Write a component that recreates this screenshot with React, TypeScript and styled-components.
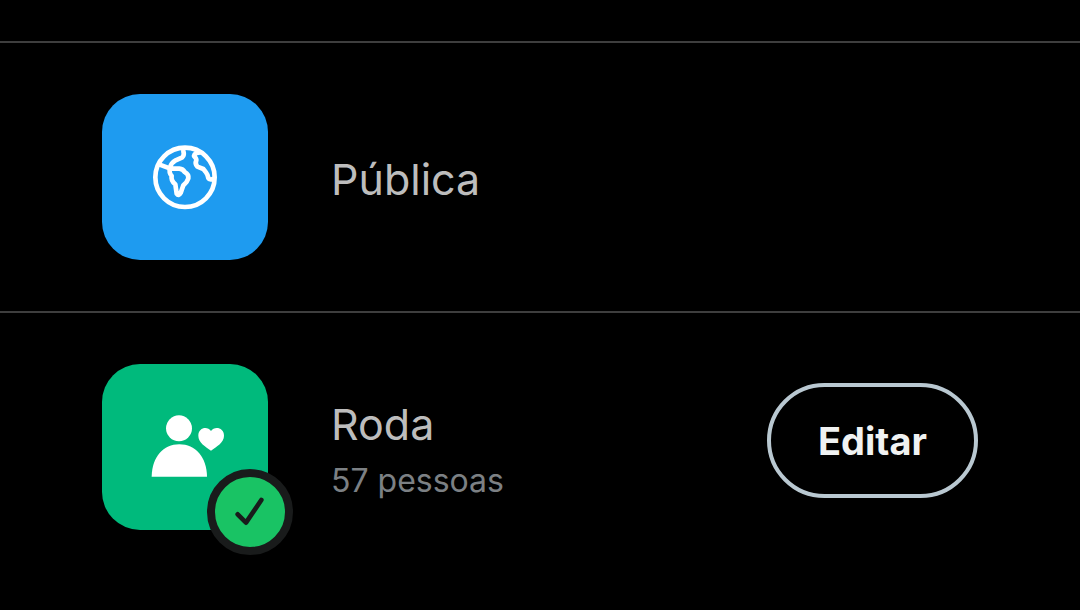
import React from "react";
import styled, { createGlobalStyle } from "styled-components";

const GlobalStyle = createGlobalStyle`
  body {
    margin: 0;
    background: #000;
    font-family: Inter, "Liberation Sans", sans-serif;
  }
`;

const Sheet = styled.main`
  padding-top: 41px;
  min-height: 100vh;
  box-sizing: border-box;
  background: #000;
`;

const List = styled.ul`
  list-style: none;
  margin: 0;
  padding: 0;
`;

const Row = styled.li`
  display: flex;
  align-items: center;
  gap: 63px;
  padding: 51px 102px;
  border-top: 2px solid #3e3e3e;
`;

const Tile = styled.div<{ $color: string }>`
  position: relative;
  display: flex;
  flex: none;
  align-items: center;
  justify-content: center;
  width: 166px;
  height: 166px;
  border-radius: 38px;
  background: ${(p) => p.$color};
`;

const Badge = styled.span`
  position: absolute;
  right: -25px;
  bottom: -25px;
  display: flex;
  align-items: center;
  justify-content: center;
  width: 70px;
  height: 70px;
  border: 8px solid #191b1b;
  border-radius: 50%;
  background: #19c364;
`;

const Labels = styled.div<{ $detailed?: boolean }>`
  flex: 1;
  min-width: 0;
  padding-top: ${(p) => (p.$detailed ? 12 : 4)}px;
`;

const Title = styled.div`
  color: #bdbdbd;
  font-size: 43px;
  line-height: 56px;
`;

const Detail = styled.div`
  color: #7c8084;
  font-size: 32px;
  line-height: 58px;
`;

const EditButton = styled.button`
  flex: none;
  margin: 0 0 13px;
  padding: 0 47px;
  height: 115px;
  border: 4px solid #b9c8d1;
  border-radius: 58px;
  background: transparent;
  color: #f0f2f2;
  font: inherit;
  font-size: 38px;
  font-weight: 700;
  cursor: pointer;
`;

const GlobeIcon = () => (
  <svg width="66" height="66" viewBox="21 17 198 198" fill="none" stroke="#fff" strokeWidth="14" strokeLinecap="round" strokeLinejoin="round" aria-hidden="true">
    <circle cx="120" cy="117" r="89" />
    <path d="M44 79L76 91H103Q114 92 119 101Q132 108 130 120Q127 131 115 141L107 164Q101 175 95 166L91 138Q77 127 80 113Q71 104 75 88Q78 74 92 66L112 57Q119 51 115 38" />
    <path d="M165 42Q149 42 147 53Q155 61 154 66Q149 77 157 85L175 92L183 102Q188 108 190 119Q194 126 204 122" />
  </svg>
);

const PersonHeartIcon = () => (
  <svg width="81" height="64" viewBox="15 29 243 192" fill="#fff" aria-hidden="true">
    <circle cx="117" cy="69" r="39" />
    <path d="M35 214C36 155 70 117 118 117S200 155 201 214Z" />
    <path d="M213 136C197 124 175 112 175 91C175 66 203 62 213 77C223 62 252 66 252 91C252 112 229 124 213 136Z" />
  </svg>
);

const CheckIcon = () => (
  <svg width="30" height="30" viewBox="0 0 90 90" fill="none" stroke="#191b1b" strokeWidth="14" strokeLinecap="round" strokeLinejoin="round" aria-hidden="true">
    <path d="M8 52L33 77L79 9" />
  </svg>
);

export default function App() {
  return (
    <>
      <GlobalStyle />
      <Sheet>
        <List>
          <Row>
            <Tile $color="#1e9bf0">
              <GlobeIcon />
            </Tile>
            <Labels>
              <Title>Pública</Title>
            </Labels>
          </Row>
          <Row>
            <Tile $color="#00ba7c">
              <PersonHeartIcon />
              <Badge>
                <CheckIcon />
              </Badge>
            </Tile>
            <Labels $detailed>
              <Title>Roda</Title>
              <Detail>57 pessoas</Detail>
            </Labels>
            <EditButton type="button">Editar</EditButton>
          </Row>
        </List>
      </Sheet>
    </>
  );
}
